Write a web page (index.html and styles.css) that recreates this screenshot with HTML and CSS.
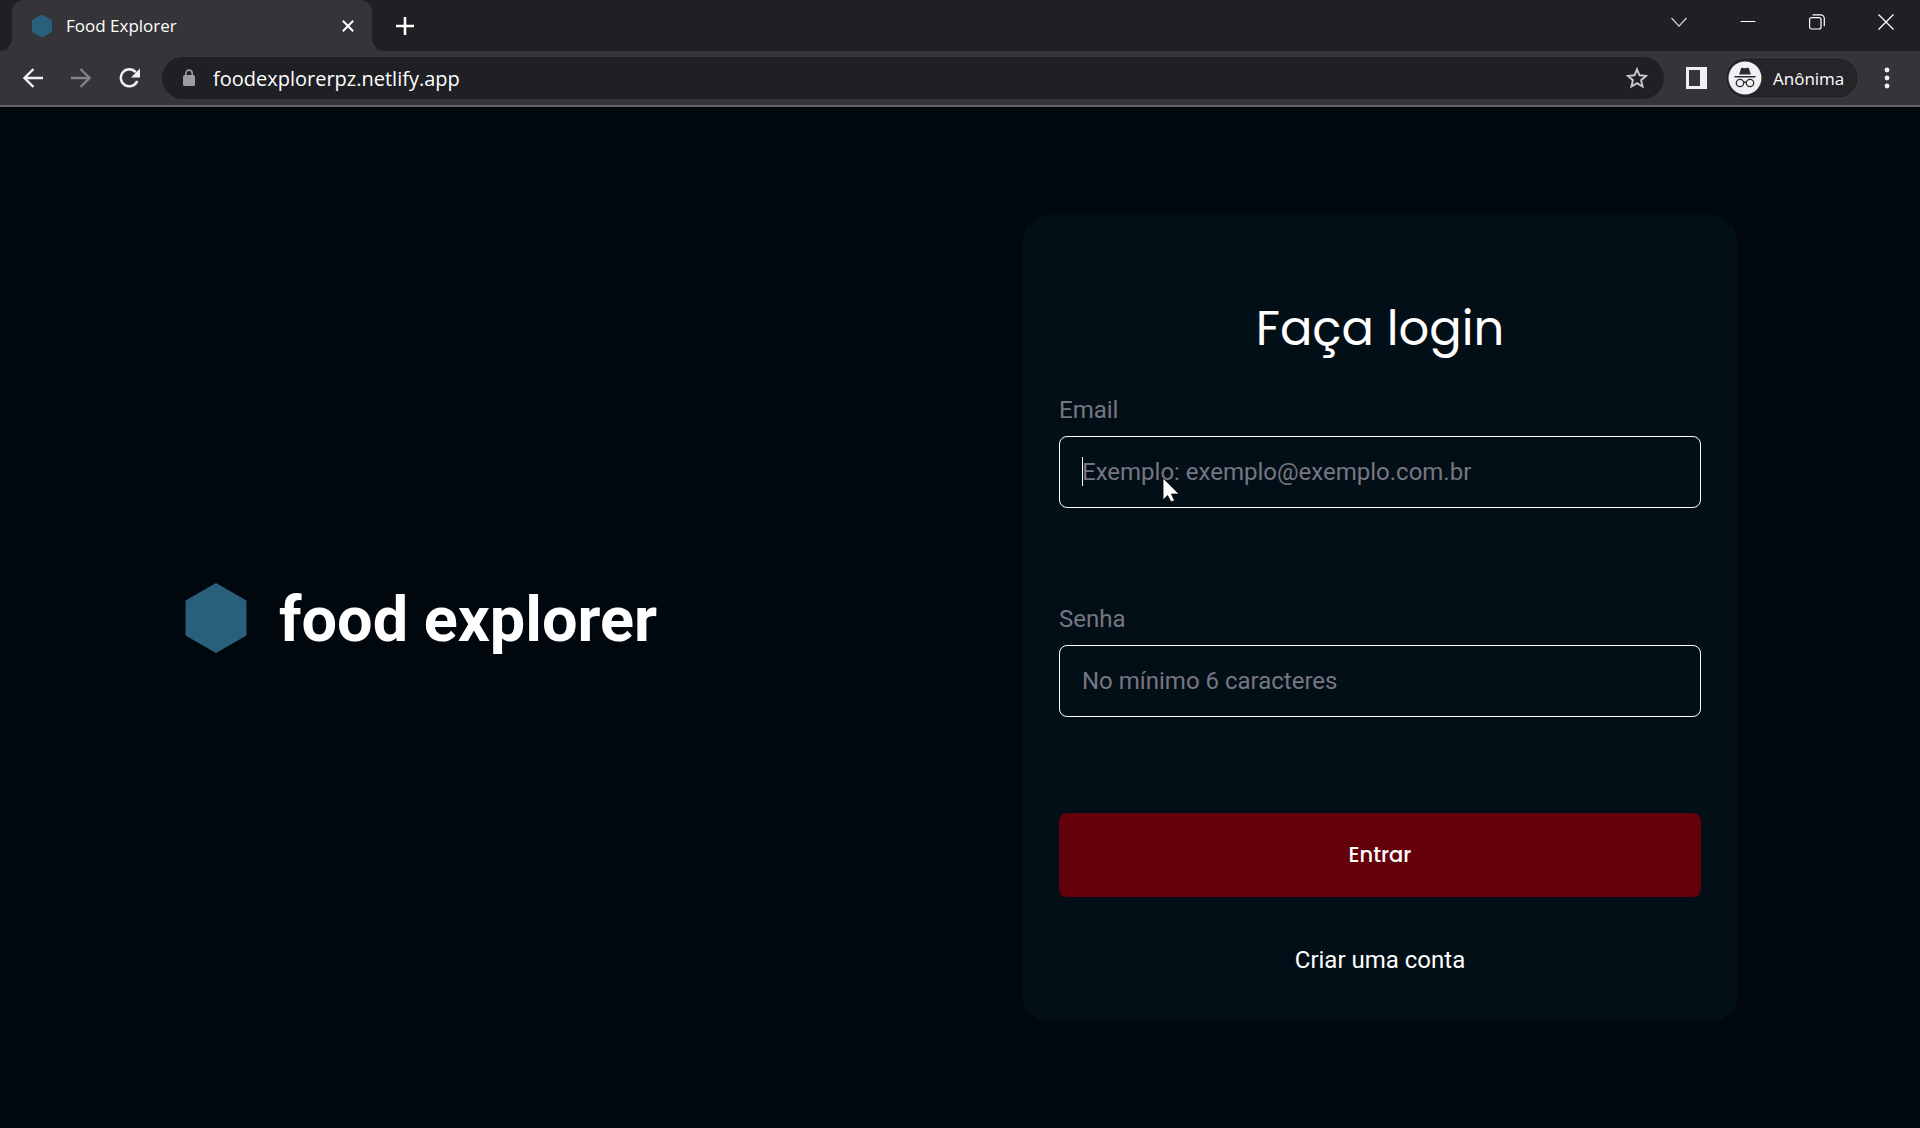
FILE: index.html
```html
<!DOCTYPE html>
<html lang="pt-BR">
<head>
<meta charset="utf-8">
<meta name="viewport" content="width=device-width, initial-scale=1">
<title>Food Explorer</title>
<link rel="stylesheet" href="styles.css">
</head>
<body>
<header class="browser">
  <div class="tabstrip">
    <div class="tab">
      <svg class="favicon" width="22" height="24" viewBox="0 0 22 24" aria-hidden="true"><path d="M11 0.5 21 6v12l-10 5.500L1 18V6z" fill="#28607c"/></svg>
      <span class="tab-title">Food Explorer</span>
      <button class="tab-close" type="button" aria-label="Fechar guia"><svg width="12" height="12" viewBox="0 0 12 12"><path d="M.8.8l10.400 10.400M11.200.8.8 11.200" stroke="#fff" stroke-width="2"/></svg></button>
    </div>
    <button class="new-tab" type="button" aria-label="Nova guia"><svg width="18" height="18" viewBox="0 0 18 18"><path d="M9 0v18M0 9h18" stroke="#fff" stroke-width="2.600"/></svg></button>
    <div class="window-controls">
      <button type="button" aria-label="Pesquisar guias"><svg width="16" height="16" viewBox="0 0 16 16"><path d="M.5 4 8 12.200 15.500 4" fill="none" stroke="#d8d8da" stroke-width="1.200"/></svg></button>
      <button type="button" aria-label="Minimizar"><svg width="16" height="16" viewBox="0 0 16 16"><path d="M.5 7.500h15" stroke="#fff"/></svg></button>
      <button type="button" aria-label="Restaurar"><svg width="16" height="16" viewBox="0 0 16 16" fill="none" stroke="#fff" stroke-width="1.200"><rect x=".6" y="3.600" width="11.400" height="11.400" rx="2"/><path d="M3.600.8h8a3.700 3.700 0 0 1 3.700 3.700v7.800"/></svg></button>
      <button type="button" aria-label="Fechar"><svg width="16" height="16" viewBox="0 0 16 16"><path d="M.5.5l15 15M15.500.5l-15 15" stroke="#fff" stroke-width="1.300"/></svg></button>
    </div>
  </div>
  <div class="toolbar">
    <button class="tool" type="button" aria-label="Voltar"><svg width="20" height="20" viewBox="0 0 20 20"><path d="M20 10H2M10.500 1 1.500 10l9 9" fill="none" stroke="#f1f1f4" stroke-width="2.300"/></svg></button>
    <button class="tool" type="button" aria-label="Avançar"><svg width="20" height="20" viewBox="0 0 20 20"><path d="M0 10h18M9.500 1l9 9-9 9" fill="none" stroke="#838387" stroke-width="2.300"/></svg></button>
    <button class="tool" type="button" aria-label="Atualizar"><svg width="22" height="20" viewBox="0 0 22 20"><path d="M19.200 13A8.500 8.500 0 1 1 17.800 4.300" fill="none" stroke="#f1f1f4" stroke-width="2.500"/><path d="M22 .5v9h-9z" fill="#f1f1f4"/></svg></button>
    <div class="omnibox">
      <svg width="14" height="18" viewBox="0 0 14 18" aria-hidden="true"><rect x="1" y="6" width="12" height="11" rx="1.500" fill="#9c9ca2"/><path d="M3.800 7V4.300a3.200 3.200 0 0 1 6.400 0V7" fill="none" stroke="#9c9ca2" stroke-width="1.600"/></svg>
      <input class="address" type="text" value="foodexplorerpz.netlify.app" aria-label="Barra de endereço">
      <button class="star" type="button" aria-label="Favoritar"><svg width="24" height="24" viewBox="0 0 24 24"><path d="M12 3.300 14.500 9.300 21 9.900 16.100 14.200 17.600 20.500 12 17.200 6.400 20.500 7.900 14.200 3 9.900 9.500 9.300z" fill="none" stroke="#c9c9cd" stroke-width="1.900"/></svg></button>
    </div>
    <div class="actions">
      <button class="tool" type="button" aria-label="Painel lateral"><svg width="22" height="22" viewBox="0 0 22 22"><path fill-rule="evenodd" d="M0 0h21v22H0zM3 3v16h11V3z" fill="#f1f1f4"/></svg></button>
      <button class="profile" type="button">
        <svg width="34" height="34" viewBox="0 0 34 34" aria-hidden="true"><circle cx="17" cy="17" r="16.500" fill="#f1f1f4"/><path d="M11.200 13.500 13 7.400q.3-.9 1.200-.7l2.800.6 2.800-.6q.9-.2 1.200.7l1.800 6.100zM6.500 15h21v1.500h-21z" fill="#2b2b2f"/><g fill="none" stroke="#2b2b2f" stroke-width="1.300"><circle cx="12" cy="22" r="3.700"/><circle cx="22" cy="22" r="3.700"/><path d="M15.700 21.500q1.300-1 2.600 0"/></g></svg>
        <span>Anônima</span>
      </button>
      <button class="tool" type="button" aria-label="Menu"><svg width="6" height="22" viewBox="0 0 6 22" fill="#f1f1f4"><circle cx="3" cy="3" r="2.400"/><circle cx="3" cy="11" r="2.400"/><circle cx="3" cy="19" r="2.400"/></svg></button>
    </div>
  </div>
</header>
<main class="page">
  <h1 class="brand">
    <svg width="62" height="70" viewBox="0 0 62 70" aria-hidden="true"><path d="M31 0 61.500 17.500v35L31 70 .5 52.500v-35z" fill="#28607c"/></svg>
    <span>food explorer</span>
  </h1>
  <form class="card">
    <h2 class="title">Faça login</h2>
    <div class="field">
      <label for="email">Email</label>
      <div class="control">
        <input id="email" type="email" placeholder="Exemplo: exemplo@exemplo.com.br">
        <span class="caret"></span>
        <svg class="pointer" width="18" height="26" viewBox="0 0 18 26" aria-hidden="true"><path d="M1 1v22l4.600-4.400L9 25l3.600-1.500-3.200-6.400H17z" fill="#fff" stroke="#000" stroke-width=".8"/></svg>
      </div>
    </div>
    <div class="field">
      <label for="senha">Senha</label>
      <div class="control"><input id="senha" type="password" placeholder="No mínimo 6 caracteres"></div>
    </div>
    <button class="submit" type="submit">Entrar</button>
    <a class="signup" href="#criar-conta">Criar uma conta</a>
  </form>
</main>
</body>
</html>
```
FILE: styles.css
```css
* { box-sizing: border-box; }

body {
  margin: 0;
  min-height: 100vh;
  display: flex;
  flex-direction: column;
  background: #00070d;
  color: #fff;
  font-family: Roboto, sans-serif;
}

button {
  padding: 0;
  border: 0;
  background: none;
  color: inherit;
  display: flex;
  align-items: center;
  justify-content: center;
}

input { min-width: 0; outline: none; }
svg { flex: none; }

/* Browser frame */
.browser {
  background: #353539;
  border-bottom: 2px solid #656568;
  font-family: "Segoe UI", "Open Sans", sans-serif;
}

.tabstrip {
  height: 51px;
  padding-left: 12px;
  display: flex;
  background: #1f2023;
}

.tab {
  position: relative;
  width: 360px;
  padding: 0 18px 0 19px;
  display: flex;
  align-items: center;
  gap: 13px;
  background: #353539;
  border-radius: 12px 12px 0 0;
}

.tab::before,
.tab::after {
  content: "";
  position: absolute;
  bottom: 0;
  width: 12px;
  height: 12px;
}

.tab::before { right: 100%; background: radial-gradient(circle at 0 0, #1f2023 12px, #353539 12px); }
.tab::after { left: 100%; background: radial-gradient(circle at 100% 0, #1f2023 12px, #353539 12px); }

.tab-title { flex: 1; font-size: 17px; }
.new-tab { width: 66px; }

.window-controls { margin-left: auto; display: flex; height: 43px; }
.window-controls button { width: 69px; }

.toolbar {
  height: 54px;
  padding: 0 9px;
  display: flex;
  align-items: center;
}

.tool { width: 48px; height: 42px; }

.omnibox {
  flex: 1;
  height: 42px;
  margin: 0 9px;
  padding: 0 15px 0 20px;
  display: flex;
  align-items: center;
  gap: 17px;
  background: #1f2023;
  border-radius: 21px;
}

.address {
  flex: 1;
  padding: 0;
  border: 0;
  background: none;
  color: #fff;
  font: 20px "Segoe UI", "Open Sans", sans-serif;
}

.actions { display: flex; align-items: center; gap: 4px; }

.profile {
  width: 134px;
  height: 42px;
  padding-left: 2px;
  gap: 11px;
  justify-content: flex-start;
  background: #252529;
  border: 1px solid #414145;
  border-radius: 21px;
  font: 17px "Segoe UI", "Open Sans", sans-serif;
}

/* Login page */
.page {
  flex: 1;
  padding: 48px 183px 48px 185px;
  display: flex;
  align-items: center;
  justify-content: space-between;
  gap: 48px;
}

.brand {
  margin: 0;
  display: flex;
  align-items: center;
  gap: 32px;
  font-size: 63px;
  line-height: 72px;
  white-space: nowrap;
}

.brand span { padding-top: 4px; }

.card {
  flex: 0 1 714px;
  padding: 78px 36px 46px;
  display: flex;
  flex-direction: column;
  background: #030f16;
  border-radius: 24px;
}

.title {
  margin: 0 0 30px;
  font: 400 48px/72px Poppins, Inter, sans-serif;
  text-align: center;
}

.field { margin-bottom: 96px; }

.field label {
  display: block;
  margin-bottom: 10px;
  font-size: 24px;
  line-height: 31px;
  color: #767683;
}

.control { position: relative; display: flex; }

.control input {
  width: 100%;
  height: 72px;
  padding: 0 22px;
  background: none;
  border: 1px solid #fff;
  border-radius: 8px;
  color: #fff;
  font: 24px Roboto, sans-serif;
}

.control input::placeholder { color: #767683; opacity: 1; }

.caret {
  position: absolute;
  left: 23px;
  top: 21px;
  width: 1px;
  height: 29px;
  background: #fff;
}

.pointer { position: absolute; left: 103px; top: 41px; }

.submit {
  height: 84px;
  background: #63000a;
  border-radius: 8px;
  font: 500 21px Poppins, Inter, sans-serif;
}

.signup {
  margin-top: 48px;
  align-self: center;
  font-size: 24px;
  line-height: 30px;
  color: #fff;
  text-decoration: none;
}
```
